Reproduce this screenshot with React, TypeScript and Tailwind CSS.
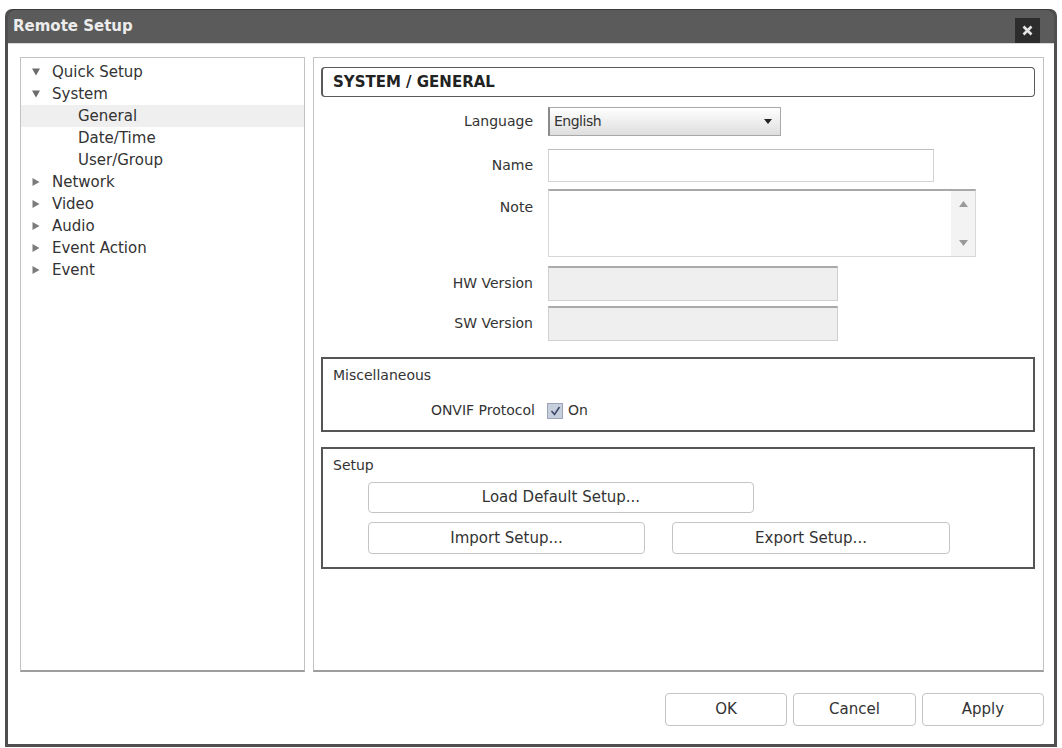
import React from "react";

type TreeItem = { label: string; depth: 0 | 1; open?: boolean; selected?: boolean };

const TREE: TreeItem[] = [
  { label: "Quick Setup", depth: 0, open: true },
  { label: "System", depth: 0, open: true },
  { label: "General", depth: 1, selected: true },
  { label: "Date/Time", depth: 1 },
  { label: "User/Group", depth: 1 },
  { label: "Network", depth: 0, open: false },
  { label: "Video", depth: 0, open: false },
  { label: "Audio", depth: 0, open: false },
  { label: "Event Action", depth: 0, open: false },
  { label: "Event", depth: 0, open: false },
];

const Caret = ({ open }: { open: boolean }) => (
  <svg width="10" height="10" viewBox="0 0 10 10" className="shrink-0">
    {open ? <path d="M1 1.5 L9 1.5 L5 8.5 Z" fill="#6c6c6c" /> : <path d="M1.5 1 L8.5 5 L1.5 9 Z" fill="#7c7c7c" />}
  </svg>
);

const Btn = ({ label, className }: { label: string; className: string }) => (
  <button
    className={`flex items-center justify-center rounded-[4px] border border-[#c4c4c4] bg-white text-[15px] text-[#333] ${className}`}
  >
    {label}
  </button>
);

export default function App() {
  return (
    <div className="w-[1062px] h-[748px] bg-white pt-[9px] px-[5px] font-['DejaVu_Sans',sans-serif] text-[#333]">
      {/* window frame */}
      <div className="h-[738px] flex flex-col rounded-t-[7px] bg-[#4f4f4f] px-[3px] pb-[3px]">
        <div className="h-[34px] flex items-center justify-between pl-[5px] pr-[14px] rounded-t-[7px] bg-[#5b5b5b] border-t border-[#3a3a3a]">
          <span className="text-[15px] font-bold text-[#ececec] mb-[1px]">Remote Setup</span>
          <span className="self-end w-[25px] h-[25px] bg-[#2c2c2c] flex items-center justify-center">
            <svg width="11" height="11" viewBox="0 0 11 11">
              <path d="M1.5 1.5 L9.5 9.5 M9.5 1.5 L1.5 9.5" stroke="#e6e6e6" strokeWidth="2.6" />
            </svg>
          </span>
        </div>

        <div className="flex-1 flex flex-col bg-white border-t border-[#d9d9d9]">
          <div className="h-[615px] mt-[13px] ml-[12px] mr-[10px] flex gap-[8px]">
            {/* menu tree */}
            <div className="w-[285px] border border-[#c2c2c2] border-b-2 border-b-[#9d9d9d] pt-[3px]">
              {TREE.map((t) => (
                <div
                  key={t.label}
                  className={`h-[22px] flex items-center text-[15px] ${t.selected ? "bg-[#efefef]" : ""}`}
                >
                  {t.depth === 0 ? (
                    <div className="flex items-center pl-[10px] gap-[11px]">
                      <Caret open={!!t.open} />
                      <span>{t.label}</span>
                    </div>
                  ) : (
                    <span className="pl-[57px]">{t.label}</span>
                  )}
                </div>
              ))}
            </div>

            {/* settings page */}
            <div className="flex-1 border border-[#c2c2c2] border-b-2 border-b-[#9d9d9d] pl-[7px] pr-[8px] pt-[9px] text-[14px]">
              <div className="h-[30px] rounded-[4px] border border-[#5a5a5a] border-l-2 flex items-center pl-[10px] text-[15px] font-bold text-[#222]">
                SYSTEM / GENERAL
              </div>

              <div className="mt-[10px] flex items-center">
                <span className="w-[212px] text-right">Language</span>
                <div className="ml-[15px] w-[233px] h-[29px] border border-[#a8a8a8] border-l-2 border-l-[#8a8a8a] bg-gradient-to-b from-white to-[#dedede] flex items-center justify-between pl-[4px] pr-[8px]">
                  <span className="text-[14px] tracking-[-0.5px]">English</span>
                  <svg width="8" height="5" viewBox="0 0 8 5">
                    <path d="M0 0 L8 0 L4 5 Z" fill="#222" />
                  </svg>
                </div>
              </div>

              <div className="mt-[13px] flex items-center">
                <span className="w-[212px] text-right">Name</span>
                <div className="ml-[15px] w-[386px] h-[33px] border border-[#d2d2d2] border-t-[#bdbdbd] bg-white" />
              </div>

              <div className="mt-[7px] flex items-start">
                <span className="w-[212px] text-right pt-[8px]">Note</span>
                <div className="ml-[15px] w-[428px] h-[68px] border border-[#d8d8d8] border-t-2 border-t-[#a9a9a9] bg-white flex justify-end">
                  <div className="w-[24px] h-full bg-[#f3f3f3] flex flex-col items-center justify-between py-[10px]">
                    <svg width="9" height="6" viewBox="0 0 9 6">
                      <path d="M0 6 L4.5 0 L9 6 Z" fill="#9a9a9a" />
                    </svg>
                    <svg width="9" height="6" viewBox="0 0 9 6">
                      <path d="M0 0 L9 0 L4.5 6 Z" fill="#9a9a9a" />
                    </svg>
                  </div>
                </div>
              </div>

              <div className="mt-[9px] flex items-center">
                <span className="w-[212px] text-right">HW Version</span>
                <div className="ml-[15px] w-[290px] h-[35px] border border-[#d0d0d0] border-t-2 border-t-[#aaaaaa] bg-[#efefef]" />
              </div>

              <div className="mt-[5px] flex items-center">
                <span className="w-[212px] text-right">SW Version</span>
                <div className="ml-[15px] w-[290px] h-[35px] border border-[#d0d0d0] border-t-2 border-t-[#aaaaaa] bg-[#efefef]" />
              </div>

              <div className="mt-[16px] h-[75px] border-2 border-[#555] pl-[10px] pt-[6px]">
                <div>Miscellaneous</div>
                <div className="mt-[14px] flex items-center">
                  <span className="w-[202px] text-right">ONVIF Protocol</span>
                  <span className="ml-[12px] w-[16px] h-[16px] bg-[#c8cfdc] border border-[#9aa4b6] flex items-center justify-center">
                    <svg width="11" height="10" viewBox="0 0 11 10">
                      <path d="M1.5 5 L4.5 8.5 L9.5 1" stroke="#3b4a6b" strokeWidth="1.6" fill="none" />
                    </svg>
                  </span>
                  <span className="ml-[5px]">On</span>
                </div>
              </div>

              <div className="mt-[15px] h-[122px] border-2 border-[#555] pl-[10px] pt-[6px]">
                <div>Setup</div>
                <div className="ml-[35px] mt-[6px] flex flex-col gap-[9px]">
                  <Btn label="Load Default Setup..." className="w-[386px] h-[31px]" />
                  <div className="flex gap-[27px]">
                    <Btn label="Import Setup..." className="w-[277px] h-[32px]" />
                    <Btn label="Export Setup..." className="w-[278px] h-[32px]" />
                  </div>
                </div>
              </div>
            </div>
          </div>

          <div className="mt-[21px] mr-[10px] flex justify-end gap-[6px]">
            <Btn label="OK" className="w-[122px] h-[33px] text-[14px]" />
            <Btn label="Cancel" className="w-[123px] h-[33px] text-[14px]" />
            <Btn label="Apply" className="w-[122px] h-[33px] text-[14px]" />
          </div>
        </div>
      </div>
    </div>
  );
}
